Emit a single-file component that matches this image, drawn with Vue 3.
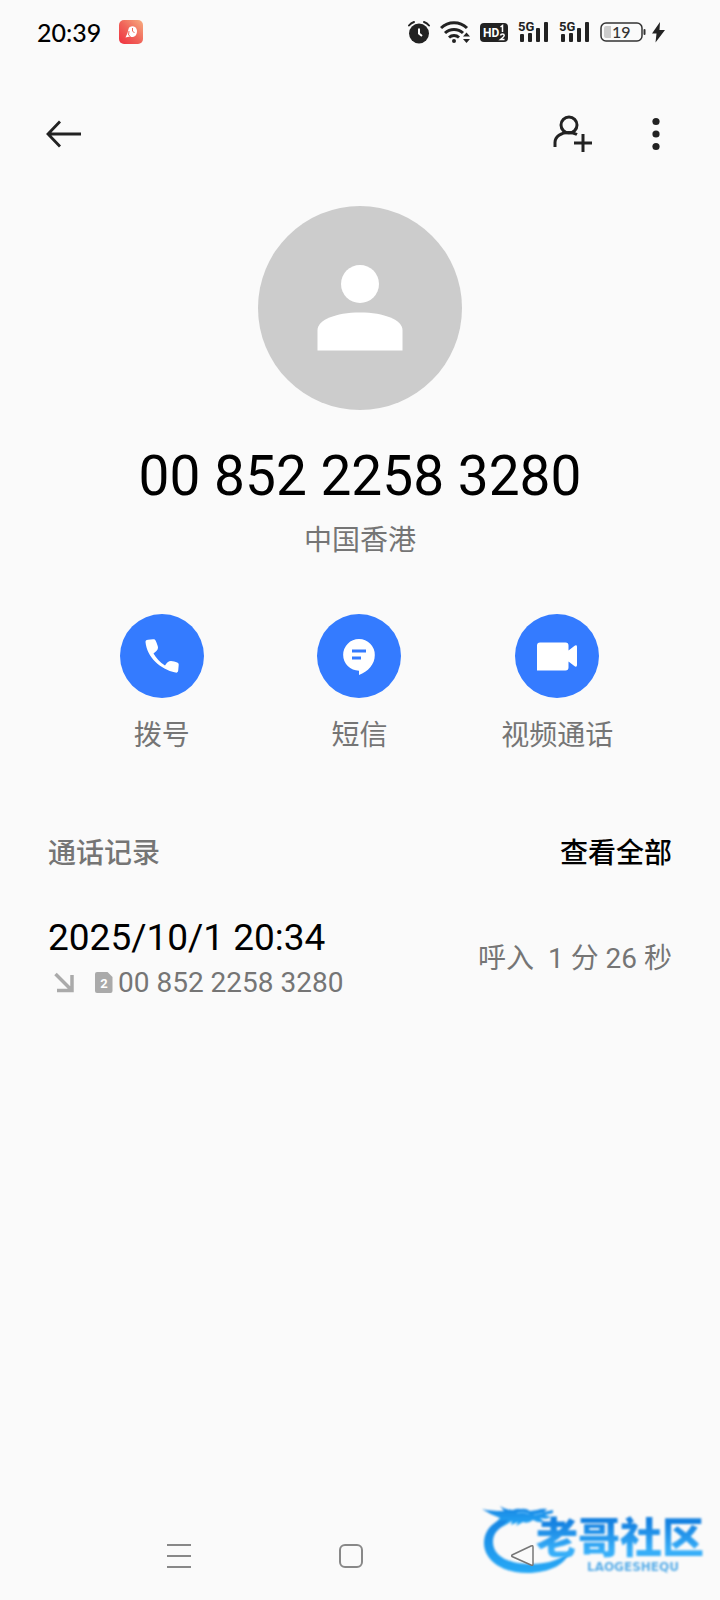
<script setup>
const phone = '00 852 2258 3280'
const actions = [
  { id: 'call', label: '拨号' },
  { id: 'sms', label: '短信' },
  { id: 'video', label: '视频通话' },
]
const calls = [
  { time: '2025/10/1 20:34', number: phone, kind: '呼入', duration: '1 分 26 秒' },
]
</script>

<template>
  <div class="screen" lang="zh-CN">
    <div class="status">
      <span class="clock">20:39</span>
      <svg class="app-badge" width="24" height="24" viewBox="0 0 24 24" aria-hidden="true">
        <defs>
          <linearGradient id="badge" x1="0" y1="1" x2="1" y2="0">
            <stop offset="0" stop-color="#f0303f" />
            <stop offset="0.5" stop-color="#f0655a" />
            <stop offset="1" stop-color="#f7ae80" />
          </linearGradient>
        </defs>
        <rect width="24" height="24" rx="5" fill="url(#badge)" />
        <path d="M9.500 9c.5-2.500 4-3.500 6.500-2 2.500 1.800 2.500 5.500 1 8-1.500 2.200-4.500 2.500-6 1.500L6.500 17.500l2-4.500z" fill="#fff" />
        <path d="M13.500 8v3l2 2M10 11l-.5 4 2 1.500" fill="none" stroke="#ee6a5c" stroke-width="1" />
      </svg>
      <div class="status-icons">
        <svg width="22" height="24" viewBox="0 0 22 24" aria-hidden="true">
          <circle cx="11" cy="13.500" r="10" fill="#222" />
          <path d="M1 5.500Q3 3 6 2M21 5.500Q19 3 16 2" fill="none" stroke="#222" stroke-width="2" stroke-linecap="round" />
          <path d="M11 8.500v5l3 2.500" fill="none" stroke="#fff" stroke-width="2" />
        </svg>
        <svg width="30" height="24" viewBox="0 0 30 24" aria-hidden="true">
          <g fill="none" stroke="#222" stroke-width="3">
            <path d="M1 8a18.500 18.500 0 0 1 26 0" />
            <path d="M5 13a13 13 0 0 1 18 0" />
            <path d="M9 17.500a7.500 7.500 0 0 1 10 0" />
          </g>
          <circle cx="14" cy="21" r="2" fill="#222" />
          <path d="M23 16.500l3.500-4 3.500 4zM23 19l3.500 4 3.500-4z" fill="#222" />
        </svg>
        <svg width="28" height="24" viewBox="0 0 28 24" aria-hidden="true">
          <rect y="3" width="28" height="19" rx="4" fill="#222" />
          <text class="hd" x="3" y="17">HD</text>
          <path d="M20.500 7l2-1.500V12M20.500 15.500q.3-1.500 2-1.500t1.700 1.500q0 1-3.700 4h4" fill="none" stroke="#fff" stroke-width="1.500" />
        </svg>
        <svg v-for="sim in 2" :key="sim" class="signal" width="32" height="24" viewBox="0 0 32 24" aria-hidden="true">
          <text class="net" x="0" y="11">5G</text>
          <g fill="#222">
            <rect x="2" y="14" width="4" height="8" rx="1" />
            <rect x="10" y="13" width="4" height="9" rx="1" />
            <rect x="18" y="8" width="4" height="14" rx="1" />
            <rect x="26" y="2" width="4" height="20" rx="1" />
          </g>
        </svg>
        <svg width="46" height="24" viewBox="0 0 46 24" aria-hidden="true">
          <rect x="1" y="3" width="41" height="18" rx="5" fill="none" stroke="#333" stroke-width="1.500" />
          <path d="M6 6h5v12H6a2 2 0 0 1-2-2V8a2 2 0 0 1 2-2z" fill="#ccc" />
          <rect x="43.500" y="9" width="2" height="6" rx="1" fill="#333" />
          <text class="level" x="12" y="18">19</text>
        </svg>
        <svg width="13" height="24" viewBox="0 0 13 24" aria-hidden="true">
          <path d="M8 2L0 13.500h4.500L3.500 22.500 13 10H7.500z" fill="#222" />
        </svg>
      </div>
    </div>

    <header class="bar">
      <button type="button" class="icon-btn" aria-label="返回">
        <svg width="36" height="36" viewBox="0 0 36 36" fill="none" stroke="#222" stroke-width="2.800">
          <path d="M35 18H2M14 5.500L2 18l12 12.500" />
        </svg>
      </button>
      <div class="bar-end">
        <button type="button" class="icon-btn" aria-label="新建联系人">
          <svg width="40" height="38" viewBox="0 0 40 38" fill="none" stroke="#222" stroke-width="3">
            <circle cx="16" cy="10" r="8" />
            <path d="M2 32v-4.500C2 21.500 8 17.500 16 17.500c3 0 5 .5 8 2" />
            <path d="M30 19v18M21 28h18" />
          </svg>
        </button>
        <button type="button" class="icon-btn" aria-label="更多">
          <svg width="8" height="36" viewBox="0 0 8 36" fill="#222">
            <circle cx="4" cy="5.500" r="3.600" />
            <circle cx="4" cy="18" r="3.600" />
            <circle cx="4" cy="30.500" r="3.600" />
          </svg>
        </button>
      </div>
    </header>

    <main>
      <section class="profile">
        <svg class="avatar" width="204" height="204" viewBox="0 0 204 204" aria-hidden="true">
          <circle cx="102" cy="102" r="102" fill="#ccc" />
          <circle cx="102" cy="78" r="19" fill="#fff" />
          <path d="M59.500 144.500v-20.500c0-10 18-17.500 42.500-17.500s42.500 7.500 42.500 17.500v20.500z" fill="#fff" />
        </svg>
        <h1>{{ phone }}</h1>
        <p class="region">中国香港</p>
      </section>

      <div class="actions">
        <button v-for="a in actions" :key="a.id" type="button" class="action">
          <span class="disc">
            <svg width="84" height="84" viewBox="0 0 84 84" fill="#fff" aria-hidden="true">
              <path v-if="a.id === 'call'" d="M25.500 28c0-1.500 1-2 2.500-2.200l5-.5c1.500-.2 2.300.4 2.800 1.700 1 2.500 2.200 5 2.200 6.800 0 2.500-2.700 4.200-4.500 5.700 2.500 4.500 6.500 9 11.500 12 1.500-2.500 3.500-4.600 6-4.600 2 0 4.500.8 6.200 1.500 1.300.5 1.600 1.300 1.500 2.700l-.5 5.500c-.2 1.700-1.200 2.400-2.800 2-15-3.500-28.500-15.300-29.900-30.600z" />
              <template v-else-if="a.id === 'sms'">
                <path d="M42 25a15.800 15.800 0 0 1 15.800 16c0 9.500-6.800 16.500-15.800 20v-4.300A15.800 15.800 0 0 1 42 25z" />
                <path d="M35 37h14M35 44h9" stroke="#347bff" stroke-width="2.800" />
              </template>
              <path v-else d="M22 31.500a3 3 0 0 1 3-3h25.500a3 3 0 0 1 3 3v5l5.500-4.300c2-1.500 3-1 3 1v17.600c0 2-1 2.500-3 1L53.500 47.500v6a3 3 0 0 1-3 3H22z" />
            </svg>
          </span>
          <span class="action-label">{{ a.label }}</span>
        </button>
      </div>

      <section class="log">
        <div class="log-head">
          <h2>通话记录</h2>
          <button type="button" class="all">查看全部</button>
        </div>
        <ul class="calls">
          <li v-for="c in calls" :key="c.time" class="call">
            <div>
              <div class="time">{{ c.time }}</div>
              <div class="from">
                <svg class="incoming" width="22" height="22" viewBox="0 0 22 22" fill="none" stroke="#aaa" stroke-width="3.500" aria-hidden="true">
                  <path d="M1.500 2l15 15M18 3v15.500H3" />
                </svg>
                <svg class="sim" width="18" height="22" viewBox="0 0 18 22" aria-hidden="true">
                  <path d="M2 0h10.500L17.500 5v14a2 2 0 0 1-2 2H2a2 2 0 0 1-2-2V2a2 2 0 0 1 2-2z" fill="#aaa" />
                  <text class="sim-no" x="9" y="16">2</text>
                </svg>
                <span>{{ c.number }}</span>
              </div>
            </div>
            <div class="detail"><span>{{ c.kind }}</span><span>{{ c.duration }}</span></div>
          </li>
        </ul>
      </section>
    </main>

    <div class="brand">
      <svg class="dragon" width="94" height="76" viewBox="0 0 94 76" aria-hidden="true">
        <defs>
          <linearGradient id="swoosh" x1="0" y1="0" x2="0" y2="1">
            <stop offset="0" stop-color="#1684e2" />
            <stop offset="1" stop-color="#27a9f6" />
          </linearGradient>
        </defs>
        <g fill="url(#swoosh)">
          <path d="M26 17C10 21 2 31 2 43c0 17 18 30 43 30 23 0 40-9 44-24-8 10-22 15-40 15-23 0-38-8-38-22 0-9 6-15 16-19z" />
          <path d="M0 9q8 2 22 2l-4-5q6 4 13 4 4-2 8-1 5-1 9 2l7-1q6-2 10-1l-3 3 9-2v3l-8 2 6 2q-4 3-11 1l4 4q-6 1-11-2-5 4-10 2l-7 4 2-4-7 3 1-4-10 6 6-7-11 1 3-3Q9 15 0 9z" />
        </g>
        <path d="M35 13q6-2 12 1M52 15l9-2" fill="none" stroke="#6cc0fa" stroke-width="1" />
      </svg>
      <div class="brand-text">
        <span class="brand-name">老哥社区</span>
        <span class="brand-latin">LAOGESHEQU</span>
      </div>
    </div>

    <nav class="nav" aria-label="系统导航">
      <button type="button" aria-label="最近任务">
        <svg width="24" height="26" viewBox="0 0 24 26" stroke="#888" stroke-width="2">
          <path d="M0 2h24M0 13h24M0 24h24" />
        </svg>
      </button>
      <button type="button" aria-label="主屏幕">
        <svg width="24" height="26" viewBox="0 0 24 26" fill="none" stroke="#888" stroke-width="2">
          <rect x="1" y="2" width="22" height="22" rx="5" />
        </svg>
      </button>
      <button type="button" aria-label="返回">
        <svg width="24" height="26" viewBox="0 0 24 26" fill="#fafafa" stroke="#777" stroke-width="1.500">
          <path d="M1 12L20 3q2-1 2 1v17q0 2-2 1L1 13.500q-1-.8 0-1.500z" />
        </svg>
      </button>
    </nav>
  </div>
</template>

<style>
body {
  background: #fafafa;
}
</style>

<style scoped>
.screen {
  position: relative;
  display: flex;
  flex-direction: column;
  min-height: 100vh;
  box-sizing: border-box;
  background: #fafafa;
  color: #000;
  font-family: Roboto, "Noto Sans CJK SC", sans-serif;
}
button {
  padding: 0;
  border: 0;
  background: none;
  color: inherit;
  font: inherit;
  cursor: pointer;
}
svg {
  display: block;
  flex: none;
}
h1,
h2,
p,
ul {
  margin: 0;
  padding: 0;
  font-weight: 400;
}
.status {
  display: flex;
  align-items: center;
  height: 64px;
  padding: 0 55px 0 37px;
}
.clock {
  font-family: Lato, sans-serif;
  font-size: 25px;
  font-weight: 500;
}
.app-badge {
  margin-left: 18px;
}
.status-icons {
  display: flex;
  align-items: center;
  gap: 10px;
  margin-left: auto;
}
.signal {
  margin-right: -1px;
}
.status-icons svg:last-child {
  margin-left: -4px;
}
.hd {
  font: 700 12px Roboto, sans-serif;
  fill: #fff;
}
.net {
  font: 700 13px Roboto, sans-serif;
  fill: #222;
}
.level {
  font: 500 16px Lato, sans-serif;
  fill: #333;
}
.bar {
  display: flex;
  justify-content: space-between;
  align-items: center;
  height: 140px;
  padding: 0 60px 0 46px;
}
.bar-end {
  display: flex;
  align-items: center;
  gap: 59px;
}
.profile {
  display: flex;
  flex-direction: column;
  align-items: center;
  padding-top: 2px;
}
h1 {
  margin-top: 33px;
  font-size: 55px;
  line-height: 66px;
}
.region {
  margin-top: 12px;
  color: #757575;
  font-size: 28px;
  line-height: 40px;
}
.actions {
  display: grid;
  grid-template-columns: repeat(3, 1fr);
  padding: 0 64px 0 63px;
  margin-top: 53px;
}
.action {
  display: flex;
  flex-direction: column;
  align-items: center;
  gap: 18px;
}
.disc {
  border-radius: 50%;
  background: #347bff;
}
.action-label {
  color: #757575;
  font-size: 28px;
  line-height: 40px;
}
.log {
  padding: 0 48px;
  margin-top: 78px;
}
.log-head {
  display: flex;
  justify-content: space-between;
  font-size: 28px;
  line-height: 40px;
}
h2 {
  color: #757575;
  font-size: 28px;
  font-weight: 500;
}
.all {
  font-weight: 500;
}
.calls {
  margin-top: 41px;
  list-style: none;
}
.call {
  display: flex;
  justify-content: space-between;
  align-items: center;
}
.time {
  font-size: 37px;
  line-height: 46px;
}
.from {
  display: flex;
  align-items: center;
  margin-top: 2px;
  padding-left: 6px;
  color: #757575;
  font-size: 28px;
  line-height: 40px;
}
.sim {
  margin: 0 5px 0 19px;
}
.sim-no {
  font: 700 13px Roboto, sans-serif;
  fill: #fff;
  text-anchor: middle;
}
.detail {
  display: flex;
  gap: 14px;
  color: #757575;
  font-size: 28px;
  line-height: 40px;
}
.nav {
  position: relative;
  display: grid;
  grid-template-columns: repeat(3, 1fr);
  margin-top: auto;
  padding: 0 111px 31px 93px;
}
.nav button {
  display: flex;
  justify-content: center;
}
.brand {
  position: absolute;
  right: 16px;
  bottom: 24px;
  width: 222px;
}
.dragon {
  filter: blur(1px);
}
.brand-text {
  position: absolute;
  right: 0;
  bottom: 2px;
  display: flex;
  flex-direction: column;
  filter: blur(1px);
}
.brand-name {
  background: linear-gradient(#1581e0 25%, #37aef8 80%);
  background-clip: text;
  color: transparent;
  font-family: "Noto Sans CJK SC", sans-serif;
  font-size: 42px;
  font-weight: 900;
  line-height: 50px;
}
.brand-latin {
  align-self: center;
  margin-left: 26px;
  color: #5baee8;
  font-family: "DejaVu Sans", sans-serif;
  font-size: 12px;
  font-weight: 700;
  line-height: 14px;
}
</style>
